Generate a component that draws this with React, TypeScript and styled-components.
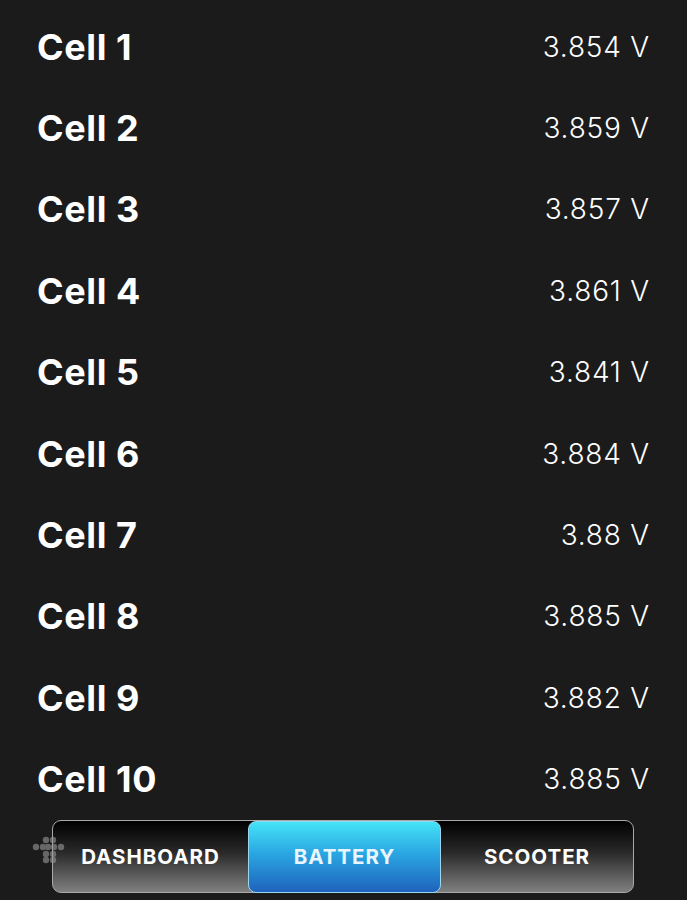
import React from "react";
import styled, { createGlobalStyle } from "styled-components";

const Global = createGlobalStyle`
  html, body { margin: 0; padding: 0; background: #1b1b1b; }
  body { font-family: "Inter", "Liberation Sans", sans-serif; }
`;

const Page = styled.div`
  width: 687px;
  height: 900px;
  background: #1b1b1b;
  position: relative;
  overflow: hidden;
  display: flex;
  flex-direction: column;
`;

const List = styled.div`
  display: flex;
  flex-direction: column;
  padding: 6px 37px 0 37px;
`;

const Row = styled.div`
  height: 81.4px;
  display: flex;
  align-items: center;
  justify-content: space-between;
`;

const Name = styled.span`
  font-family: "Inter", sans-serif;
  font-weight: 700;
  font-size: 36px;
  color: #ffffff;
  letter-spacing: 0.6px;
`;

const Value = styled.span`
  font-family: "Inter", sans-serif;
  font-weight: 300;
  font-size: 28px;
  color: #ffffff;
  letter-spacing: 0.8px;
`;

const TabBar = styled.div`
  position: absolute;
  left: 52px;
  top: 820px;
  width: 582px;
  height: 73px;
  box-sizing: border-box;
  border: 1.5px solid #a9a9a9;
  border-radius: 9px;
  background: linear-gradient(180deg, #000000 0%, #2a2a2a 45%, #808080 100%);
  display: grid;
  grid-template-columns: 195px 193px 1fr;
`;

const Tab = styled.div<{ $active?: boolean }>`
  display: flex;
  align-items: center;
  justify-content: center;
  font-family: "Inter", sans-serif;
  font-weight: 700;
  font-size: 20.5px;
  color: #ffffff;
  letter-spacing: 1px;
  border-radius: 8px;
  ${(p) =>
    p.$active
      ? `
    background: linear-gradient(180deg, #44e3f7 0%, #2aa6e2 45%, #1f63bd 100%);
    border: 1px solid #9ad6ee;
    margin: -0.5px 0;
    color: #eaf6ff;
  `
      : ""}
`;

const Watermark = styled.svg`
  position: absolute;
  left: 32px;
  top: 836px;
  opacity: 0.6;
`;

const cells = [
  ["Cell 1", "3.854 V"],
  ["Cell 2", "3.859 V"],
  ["Cell 3", "3.857 V"],
  ["Cell 4", "3.861 V"],
  ["Cell 5", "3.841 V"],
  ["Cell 6", "3.884 V"],
  ["Cell 7", "3.88 V"],
  ["Cell 8", "3.885 V"],
  ["Cell 9", "3.882 V"],
  ["Cell 10", "3.885 V"],
];

export default function App() {
  const dots: [number, number][] = [
    [14, 4], [21, 4],
    [4, 11], [11, 11], [16, 11], [22, 11], [29, 11],
    [14, 18], [21, 18],
    [14, 24], [21, 24],
  ];
  return (
    <Page>
      <Global />
      <List>
        {cells.map(([n, v]) => (
          <Row key={n}>
            <Name>{n}</Name>
            <Value>{v}</Value>
          </Row>
        ))}
      </List>
      <TabBar>
        <Tab>DASHBOARD</Tab>
        <Tab $active>BATTERY</Tab>
        <Tab>SCOOTER</Tab>
      </TabBar>
      <Watermark width="34" height="28" viewBox="0 0 34 28">
        {dots.map(([x, y], i) => (
          <circle key={i} cx={x} cy={y} r={3.2} fill="#9a9a9a" />
        ))}
      </Watermark>
    </Page>
  );
}
